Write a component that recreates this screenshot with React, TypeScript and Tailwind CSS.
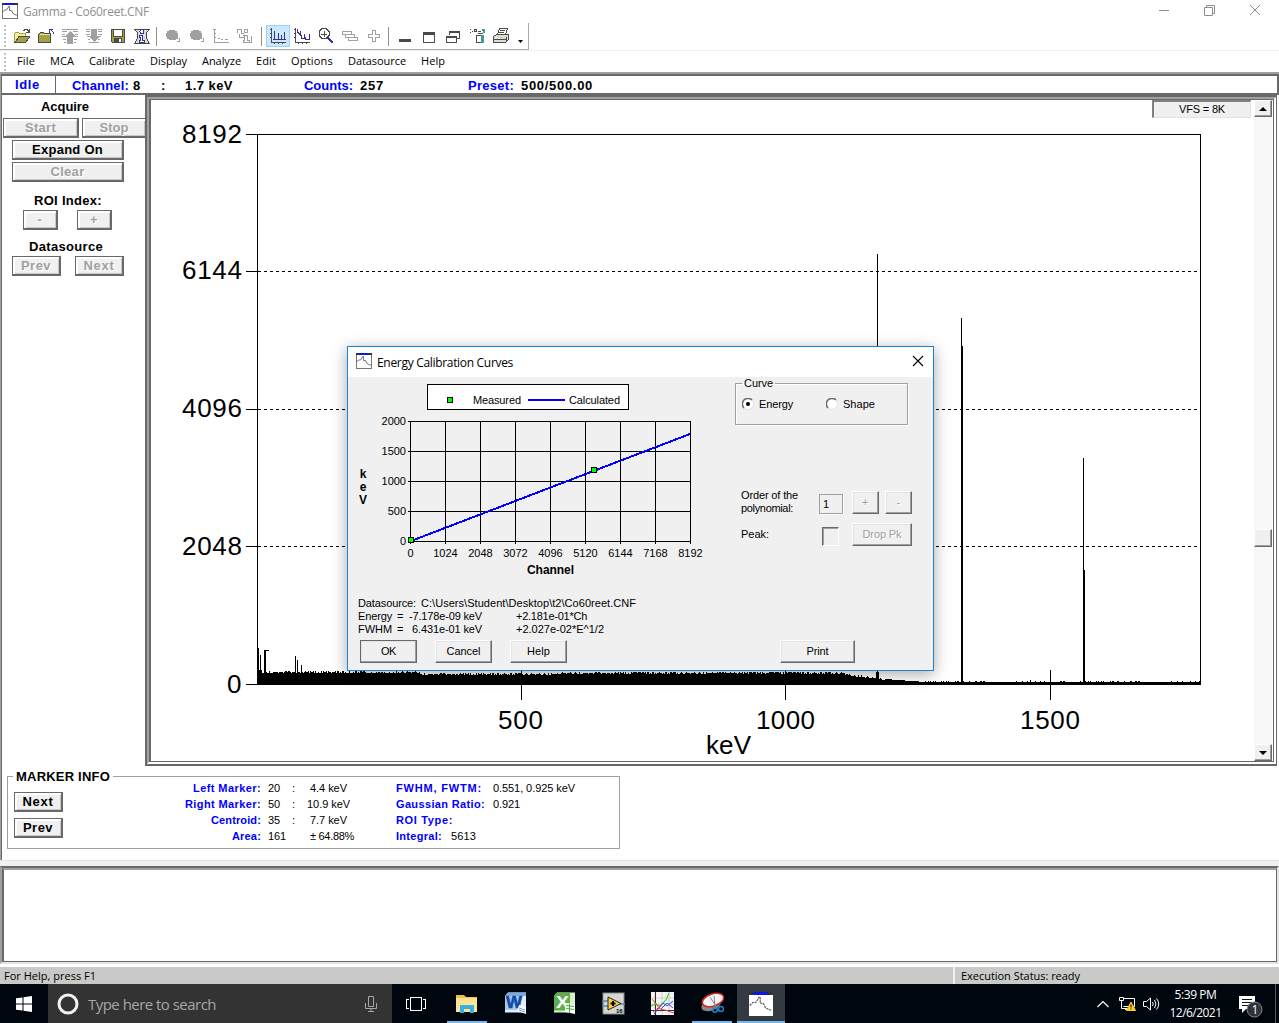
import { useLayoutEffect, useRef, type ReactNode } from "react";

type LabelProps = { w: number; children: string; className?: string };

/* One line of text, letter-spaced to fill exactly w pixels. */
function Label({ w, children, className = "" }: LabelProps) {
  const ref = useRef<HTMLSpanElement>(null);
  useLayoutEffect(() => {
    const el = ref.current;
    if (!el) return;
    el.style.letterSpacing = "0px";
    const natural = el.getBoundingClientRect().width;
    el.style.letterSpacing = `${(w - natural) / children.length}px`;
  }, [w, children]);
  return (
    <span className={`block shrink-0 whitespace-pre ${className}`} style={{ width: w }}>
      <span ref={ref} className="inline-block">{children}</span>
    </span>
  );
}

const UI = "font-['Open_Sans','Noto_Sans',sans-serif]";
const SANS = "font-['Liberation_Sans',Arial,sans-serif]";

function PanelButton({ children, tw, disabled, className }: { children: string; tw: number; disabled?: boolean; className: string }) {
  return (
    <button
      className={`flex shrink-0 items-center justify-center border border-r-2 border-b-2 border-[#696969] bg-[#f0f0f0] text-[13px] leading-none font-bold shadow-[inset_2px_2px_0_#fff,inset_-1px_-1px_0_#c8c8c8] ${disabled ? "text-[#a0a0a0] [text-shadow:1px_1px_0_#fff]" : "text-black"} ${className}`}
    >
      <Label w={tw}>{children}</Label>
    </button>
  );
}

function DialogButton({ children, tw, disabled, className = "" }: { children: string; tw: number; disabled?: boolean; className?: string }) {
  return (
    <button
      className={`flex shrink-0 items-center justify-center border border-t-white border-r-[#696969] border-b-[#696969] border-l-white bg-[#f0f0f0] text-[11px] leading-none shadow-[inset_-1px_-1px_0_#a0a0a0,inset_1px_1px_0_#e3e3e3] ${disabled ? "text-[#a0a0a0] [text-shadow:1px_1px_0_#fff]" : "text-black"} ${className}`}
    >
      <Label w={tw}>{children}</Label>
    </button>
  );
}

function AppIcon({ size = 16, gray = false }: { size?: number; gray?: boolean }) {
  return (
    <svg width={size} height={size} viewBox="0 0 16 16" className="shrink-0">
      <rect x=".5" y=".5" width="15" height="15" fill="#fff" stroke={gray ? "#777" : "#fff"} />
      <rect x="0" y="0" width="16" height="2" fill="#333" />
      <rect x="3" y="0" width="9.500" height="2" fill="#1414e6" />
      <path d="M.5 9l2-2h2l2-3v-.5h1v4l2 0 1.500 3 3 1.500h1" fill="none" stroke="#555" strokeWidth=".8" strokeDasharray={gray ? undefined : "1.500 .5"} />
    </svg>
  );
}

function Pix({ children, size = 16 }: { children: ReactNode; size?: number }) {
  return (
    <svg width={size} height={size} viewBox="0 0 16 16" shapeRendering="crispEdges" fill="none">
      {children}
    </svg>
  );
}

const G = "#a0a0a0";
const D = "#4a4a4a";

const icons: Record<string, ReactNode> = {
  open: (
    <>
      <path d="M.5 13.500V5.500l1-1h3l1 1h6v3" stroke="#a3a045" fill="#f0ee9a" />
      <path d="M1 14.500L5 8.500h11l-4.500 6z" fill="#a3a045" stroke={D} />
      <path d="M9 2.500h1V1.500h3v1h1v1" stroke={D} />
      <path d="M12 4.500h3.500V1" stroke={D} />
    </>
  ),
  close: (
    <>
      <path d="M0.500 14.500V6.500l2-2h3l1 1h6v9z" fill="#a3a045" stroke={D} />
      <path d="M2 6.500h10" stroke="#e8e68a" />
      <path d="M15.500 6V4.500l-3-3M11.500 5V1.500H15" stroke="#3a3aa0" />
    </>
  ),
  up: (
    <>
      <path d="M0 1.500h16M0 3.500h5M11 3.500h5M0 6.500h3M13 6.500h3M0 8.500h4M12 8.500h4M1 11.500h3M12 11.500h3M2 14.500h2M12 14.500h2" stroke={G} />
      <path d="M8 3l6 6h-3v7H5V9H2z" fill={G} />
    </>
  ),
  down: (
    <>
      <path d="M0 1.500h4M12 1.500h4M0 3.500h4M12 3.500h4M0 6.500h4M12 6.500h4M1 8.500h2M13 8.500h2M2 11.500h2M12 11.500h2M3 14.500h10" stroke={G} />
      <path d="M5 1h6v7h3l-6 6-6-6h3z" fill={G} />
    </>
  ),
  save: (
    <>
      <path d="M1.500 1.500h13v13h-12l-1-1z" fill="#a3a045" stroke={D} />
      <rect x="4" y="2" width="8" height="6" fill="#fff" />
      <path d="M3.500 1v7h9V1" stroke={D} />
      <rect x="4" y="10" width="8" height="5" fill={D} />
      <rect x="9" y="11" width="2" height="3" fill="#fff" />
    </>
  ),
  info: (
    <>
      <path d="M.5 1.500h15l-3 3v6l3 5H.500l3-5v-6z" fill="#dcdcdc" stroke={D} />
      <circle cx="8" cy="3.500" r="2" fill="#fff" stroke="#343496" />
      <path d="M5.500 7.500h3v5h2v2h-5v-2h1v-3h-1z" fill="#fff" stroke="#343496" />
    </>
  ),
  blob: (
    <>
      <path d="M4 2h6v1h2v2h1v6h-2v1H4v-1H2V9H1V5h1V3h2z" fill={G} />
      <path d="M12 13.500h2.500V10" stroke={G} />
    </>
  ),
  axes: <path d="M1.500 1v13.500H16M0 1.500h3M5 10.500h2M8 11.500h2M12 11.500h3M1 5.500h2M1 9.500h2" stroke={G} />,
  info2: (
    <>
      <path d="M.5 5V1.500h4v4h2M7.500 1.500h3v3h-3zM6 7.500h4.500v5h2v2h-6v-2h1v-5M14.500 8v6h-2M2.500 6v3.500h4" stroke={G} />
    </>
  ),
  spectrum: (
    <>
      <path d="M1.500 0v14.500H16M0 1.500h2M0 5.500h2M0 9.500h2M4.500 15v1M8.500 15v1M12.500 15v1" stroke={D} />
      <path d="M4.500 12V3M8.500 12V5M11.500 12V7M14.500 12V4M3 11.500h13" stroke="#343496" />
    </>
  ),
  spectrum2: (
    <>
      <path d="M1.500 0v14.500H16M0 1.500h2M0 5.500h2M0 9.500h2M4.500 15v1M8.500 15v1M12.500 15v1" stroke={D} />
      <path d="M3.500 1v3l3 3V3M7.500 7v3h3V6M11.500 9v2h4V6" stroke="#343496" />
    </>
  ),
  zoom: (
    <>
      <path d="M4 .5h4l3 3v4l-3 3H4l-3-3v-4z" fill="#fff" stroke={D} />
      <path d="M6 3v6M3 6h6" stroke={D} />
      <path d="M10 10l5 5" stroke="#343496" strokeWidth="2.500" />
    </>
  ),
  layers: <path d="M.5 3.500h9v3h-9zM3.500 7v2.500h9v-3H9M6.500 10v2.500h9v-3H12" stroke={G} />,
  plus: <path d="M6.500 2.500h3v4h4v3h-4v4h-3v-4h-4v-3h4z" stroke={G} strokeWidth="1.500" />,
  min: <rect x="2" y="11" width="12" height="3" fill={D} />,
  max: (
    <>
      <path d="M2.500 4.500h11v10h-11z" stroke={D} />
      <path d="M2 5.500h12" stroke={D} strokeWidth="3" />
    </>
  ),
  restore: (
    <>
      <path d="M4.500 7V3.500h10v7H12" stroke={D} />
      <path d="M4 4h11M1 9h11" stroke={D} strokeWidth="2" />
      <path d="M1.500 8.500h10v6h-10z" stroke={D} />
    </>
  ),
  spray: (
    <>
      <path d="M1 1h1M3 3h1M1 4h1M5 1.500h2v2H5zM9 3h3" stroke={D} />
      <path d="M7.500 7.500h7v7h-7z" fill="#fff" stroke={D} />
      <path d="M12 7h3v8h-3zM13 1h3v4h-2z" fill="#3f9a9a" />
      <path d="M9 5.500h5" stroke={D} />
    </>
  ),
  print: (
    <>
      <path d="M4.500 6.500l2-6h8l-2 6zM7 2.500h5M6 4.500h5" fill="#fff" stroke={D} />
      <path d="M.5 8.500l3-2h12v5l-3 3H.500z" fill="#ddd" stroke={D} />
      <path d="M1 11h12M13 9v5" stroke={D} />
      <rect x="7" y="9" width="3" height="1" fill="#e8d800" />
    </>
  ),
};

function ToolGroup({ names }: { names: string[] }) {
  return (
    <div className="flex">
      {names.map((n, i) => (
        <div
          key={i}
          className={`flex h-[22px] w-6 items-center justify-center ${n === "spectrum" ? "bg-[#cce8ff] outline outline-1 -outline-offset-1 outline-[#99d1ff]" : ""}`}
        >
          <Pix>{icons[n]}</Pix>
        </div>
      ))}
    </div>
  );
}

function Grip({ className }: { className: string }) {
  return <div className={`w-[2px] bg-[repeating-linear-gradient(to_bottom,#c4c4c4_0_2px,transparent_2px_4px)] ${className}`} />;
}

const menus: [string, number][] = [
  ["File", 18], ["MCA", 24], ["Calibrate", 46], ["Display", 37], ["Analyze", 39],
  ["Edit", 20], ["Options", 42], ["Datasource", 58], ["Help", 24],
];

/* Envelope of the counts histogram, with a deterministic ripple. */
function spectrumPath() {
  let d = "M257 685";
  for (let x = 257; x <= 1200; x++) {
    const n = (x * 7919 + ((x * x) % 31) * 17) % 5;
    let y: number;
    if (x < 262) y = x === 258 ? 648 : x === 260 ? 655 : 670;
    else if (x < 420) y = 671 + n * 0.5;
    else if (x < 700) y = 673.5 + n * 0.5 - ((x - 420) / 280) * 2;
    else if (x < 845) y = 671.5 + n * 0.5;
    else if (x < 885) y = 673 + ((x - 845) / 40) * 6 + n * 0.5;
    else if (x < 925) y = 679 + ((x - 885) / 40) * 3;
    else y = n === 0 ? 681 : 682;
    d += `V${y}H${x + 1}`;
  }
  return d + "V685Z";
}

function SpectrumChart() {
  return (
    <svg width="1103" height="661" viewBox="151 100 1103 661" className="block shrink-0" shapeRendering="crispEdges">
      <path d="M246 134.500H1200.500V684.500H246M257.500 134V684M246 271.500H257M246 409.500H257M246 546.500H257" fill="none" stroke="#000" />
      <path d="M258 271.500H1200M258 409.500H1200M258 546.500H1200" stroke="#000" strokeDasharray="3 3" />
      <path d="M521.500 670V700M785.500 670V700M1050.500 670V700" stroke="#000" />
      <path d={spectrumPath()} fill="#000" />
      <path d="M264.500 684V650.500H269M295.500 684V656M297.500 684V660M301.500 684V665M877.500 684V254M1030.500 684V680" fill="none" stroke="#000" />
      <path d="M265 684V650M961.500 684V318M1083.500 684V458" fill="none" stroke="#000" />
      <path d="M876 672h3v12h-3zM961 346h2v338h-2zM1083 570h2v114h-2z" fill="#000" />
      <g fontFamily="Liberation Sans, Arial, sans-serif" fontSize="26" shapeRendering="auto">
        <text x="182" y="143" textLength="60">8192</text>
        <text x="182" y="279" textLength="60">6144</text>
        <text x="182" y="417" textLength="60">4096</text>
        <text x="182" y="555" textLength="60">2048</text>
        <text x="227" y="693">0</text>
        <text x="498" y="729" textLength="45">500</text>
        <text x="756" y="729" textLength="59">1000</text>
        <text x="1020" y="729" textLength="60">1500</text>
        <text x="706" y="754" textLength="45">keV</text>
      </g>
    </svg>
  );
}

function CalibrationChart() {
  const cols = [0, 1024, 2048, 3072, 4096, 5120, 6144, 7168, 8192];
  const rows = [2000, 1500, 1000, 500, 0];
  return (
    <svg width="372" height="205" viewBox="348 377 372 205" className="block shrink-0" shapeRendering="crispEdges">
      <rect x="427.500" y="384.500" width="201" height="25" fill="#fff" stroke="#000" />
      <rect x="447.500" y="397.500" width="5" height="5" fill="#0f0" stroke="#000" />
      <path d="M528 400H565" stroke="#00f" strokeWidth="2" />
      {cols.map((_, i) => (
        <path key={i} d={`M${410.5 + 35 * i} 421V544`} stroke="#000" />
      ))}
      {rows.map((_, i) => (
        <path key={i} d={`M408 ${421.5 + 30 * i}H690`} stroke="#000" />
      ))}
      <path d="M411 541L690 434" stroke="#00f" strokeWidth="2" />
      <rect x="408.500" y="537.500" width="5" height="5" fill="#0f0" stroke="#000" />
      <rect x="591.500" y="467.500" width="5" height="5" fill="#0f0" stroke="#000" />
      <g fontFamily="Liberation Sans, Arial, sans-serif" fontSize="11">
        <text x="473" y="404" textLength="48">Measured</text>
        <text x="569" y="404" textLength="51">Calculated</text>
        {rows.map((r, i) => (
          <text key={r} x="406" y={425 + 30 * i} textAnchor="end">{r}</text>
        ))}
        {cols.map((c, i) => (
          <text key={c} x={410.500 + 35 * i} y="557" textAnchor="middle">{c}</text>
        ))}
        <g fontWeight="bold" fontSize="12">
          <text x="527" y="574" textLength="47">Channel</text>
          <text x="363" y="478" textAnchor="middle">k</text>
          <text x="363" y="491" textAnchor="middle">e</text>
          <text x="363" y="504" textAnchor="middle">V</text>
        </g>
      </g>
    </svg>
  );
}

function Radio({ on }: { on?: boolean }) {
  return (
    <svg width="12" height="12" viewBox="0 0 12 12" className="shrink-0">
      <circle cx="6" cy="6" r="5" fill="#fff" />
      <path d="M2 10A5.500 5.500 0 0 1 10 2" fill="none" stroke="#707070" strokeWidth="1.600" />
      <path d="M10 2A5.500 5.500 0 0 1 2 10" fill="none" stroke="#e3e3e3" />
      {on && <circle cx="6" cy="6" r="2" />}
    </svg>
  );
}

function CalibrationDialog() {
  return (
    <section className={`absolute top-[346px] left-[347px] flex h-[325px] w-[587px] flex-col border border-[#1883d7] bg-[#f0f0f0] text-[11px] leading-[13px] shadow-[0_3px_14px_rgba(0,0,0,0.35)] ${SANS}`}>
      <header className={`flex h-[30px] shrink-0 items-center bg-white pl-2 text-[12px] ${UI}`}>
        <span className="-mt-[2px]"><AppIcon gray /></span>
        <Label w={136} className="ml-[5px]">Energy Calibration Curves</Label>
        <svg width="12" height="12" viewBox="0 0 12 12" className="mr-[9px] mb-[2px] ml-auto">
          <path d="M1 1l10 10M11 1L1 11" stroke="#000" strokeWidth="1.100" />
        </svg>
      </header>
      <div className="flex h-[205px]">
        <CalibrationChart />
        <div className="flex flex-col">
          <fieldset className="ml-[15px] h-[48px] w-[173px] border border-[#a0a0a0] pl-[6px] shadow-[1px_1px_0_#fff,inset_1px_1px_0_#fff]">
            <legend className="px-[2px]"><Label w={29}>Curve</Label></legend>
            <div className="mt-[8px] flex items-center">
              <span className="-mt-[2px]"><Radio on /></span>
              <Label w={34} className="ml-[5px]">Energy</Label>
              <span className="-mt-[2px] ml-[33px]"><Radio /></span>
              <Label w={32} className="ml-[5px]">Shape</Label>
            </div>
          </fieldset>
          <div className="mt-[64px] ml-[21px] flex items-start">
            <div className="w-[78px]">
              <Label w={57}>Order of the</Label>
              <Label w={52}>polynomial:</Label>
            </div>
            <div className="mt-[5px] h-[20px] w-[24px] border border-[#a0a0a0] pt-[3px] pl-[3px] shadow-[1px_1px_0_#fff]">1</div>
            <DialogButton tw={7} disabled className="mt-[2px] ml-[9px] h-[23px] w-[27px]">+</DialogButton>
            <DialogButton tw={4} disabled className="mt-[2px] ml-[6px] h-[23px] w-[27px]">-</DialogButton>
          </div>
          <div className="mt-[8px] ml-[21px] flex items-start">
            <Label w={28} className="mt-[5px]">Peak:</Label>
            <div className="mt-[4px] ml-[53px] h-[19px] w-[17px] border border-t-[#696969] border-r-white border-b-white border-l-[#696969] shadow-[inset_1px_1px_0_#a0a0a0]" />
            <DialogButton tw={39} disabled className="ml-[13px] h-[23px] w-[60px]">Drop Pk</DialogButton>
          </div>
        </div>
      </div>
      <div className="mt-[15px] ml-[10px]">
        <div className="flex"><Label w={58}>Datasource:</Label><Label w={215} className="ml-[5px]">C:\Users\Student\Desktop\t2\Co60reet.CNF</Label></div>
        <div className="flex"><Label w={34}>Energy</Label><Label w={7} className="ml-[5px]">=</Label><Label w={73} className="ml-[5px]">-7.178e-09 keV</Label><Label w={71} className="ml-[34px]">+2.181e-01*Ch</Label></div>
        <div className="flex"><Label w={34}>FWHM</Label><Label w={7} className="ml-[5px]">=</Label><Label w={70} className="ml-[8px]">6.431e-01 keV</Label><Label w={88} className="ml-[34px]">+2.027e-02*E^1/2</Label></div>
      </div>
      <div className="mt-[4px] ml-[12px] flex">
        <DialogButton tw={15} className="h-[23px] w-[57px] outline outline-1 -outline-offset-1 outline-[#696969]">OK</DialogButton>
        <DialogButton tw={34} className="ml-[18px] h-[23px] w-[57px]">Cancel</DialogButton>
        <DialogButton tw={23} className="ml-[18px] h-[23px] w-[57px]">Help</DialogButton>
        <DialogButton tw={22} className="ml-[213px] h-[23px] w-[75px]">Print</DialogButton>
      </div>
    </section>
  );
}

function Arrow({ up, className = "" }: { up?: boolean; className?: string }) {
  return (
    <div className={`flex h-[17px] w-[18px] items-center justify-center border border-t-white border-r-[#696969] border-b-[#696969] border-l-white bg-[#f0f0f0] shadow-[inset_-1px_-1px_0_#a0a0a0] ${className}`}>
      <svg width="8" height="4" viewBox="0 0 8 4"><path d={up ? "M0 4h8L4 0z" : "M0 0h8L4 4z"} /></svg>
    </div>
  );
}

const leftInfo: [string, number, string, number, string, string, number, string][] = [
  ["Left Marker:", 68, "20", 12, ":", "4.4 keV", 37, "ml-[14px]"],
  ["Right Marker:", 76, "50", 12, ":", "10.9 keV", 43, "ml-[11px]"],
  ["Centroid:", 50, "35", 12, ":", "7.7 keV", 37, "ml-[14px]"],
  ["Area:", 29, "161", 18, " ", "± 64.88%", 44, "ml-[8px]"],
];
const rightInfo: [string, number, string, number, string][] = [
  ["FWHM, FWTM:", 86, "0.551, 0.925 keV", 82, "ml-[11px]"],
  ["Gaussian Ratio:", 89, "0.921", 27, "ml-[8px]"],
  ["ROI Type:", 57, "", 0, ""],
  ["Integral:", 46, "5613", 25, "ml-[9px]"],
];

function MarkerInfo() {
  return (
    <fieldset className="mt-[3px] ml-[5px] flex h-[80px] w-[613px] border border-[#a0a0a0] text-[11px] leading-4">
      <legend className="ml-[5px] px-[3px] pt-px text-[13px] leading-[14px] font-semibold"><Label w={94}>MARKER INFO</Label></legend>
      <div className="flex h-full">
        <div className="ml-[6px] flex flex-col gap-[6px] pt-[8px]">
          <PanelButton tw={31} className="h-5 w-[49px]">Next</PanelButton>
          <PanelButton tw={30} className="h-5 w-[49px]">Prev</PanelButton>
        </div>
        <div className="-mt-[4px] ml-[113px]">
          {leftInfo.map(([l, lw, a, aw, c, v, vw, m]) => (
            <div key={l} className="flex h-4">
              <div className="flex w-[85px] justify-end font-bold text-[#0000ff]"><Label w={lw}>{l}</Label></div>
              <div className="ml-[7px] w-[24px]"><Label w={aw}>{a}</Label></div>
              <Label w={4}>{c}</Label>
              <Label w={vw} className={l === "Area:" ? "ml-[14px]" : m}>{v}</Label>
            </div>
          ))}
        </div>
        <div className="-mt-[4px] ml-[42px]">
          {rightInfo.map(([l, lw, v, vw, m]) => (
            <div key={l} className="flex h-4">
              <Label w={lw} className="font-bold text-[#0000ff]">{l}</Label>
              {v && <Label w={vw} className={m}>{v}</Label>}
            </div>
          ))}
        </div>
      </div>
    </fieldset>
  );
}

const taskApps: { id: string; line?: boolean; art: ReactNode }[] = [
  {
    id: "explorer", line: true, art: (
      <>
        <path d="M1 3h8l2 2h11v15H1z" fill="#f0bd4d" />
        <path d="M1 6h21v14H1z" fill="#ffe394" />
        <path d="M5 21v-8h14v8h-4v-4H9v4z" fill="#36b1e6" />
      </>
    ),
  },
  {
    id: "word", art: (
      <>
        <path d="M4 .5h18v20H1V4z" fill="#e4eefb" />
        <path d="M4 .5h18V4H1z" fill="#7fa9de" />
        <path d="M1 4h16v14H1z" fill="#a9c8ee" />
        <text x="2" y="16" textLength="16" lengthAdjust="spacingAndGlyphs" fontSize="16" fontWeight="bold" fill="#0d4aa8" stroke="#0d4aa8" strokeWidth=".6" fontFamily="Liberation Sans, sans-serif">W</text>
        <path d="M15 13l7 2v7l-9-3z" fill="#fff" />
        <path d="M15 16l6 2M15 18l6 2" stroke="#6f9bd8" />
      </>
    ),
  },
  {
    id: "excel", art: (
      <>
        <path d="M4 .5h18v20H1V4z" fill="#d8efcd" />
        <path d="M4 .5h13v18H1V4z" fill="#5eae4a" />
        <text x="3" y="16" textLength="13" lengthAdjust="spacingAndGlyphs" fontSize="17" fontWeight="bold" fill="#fff" fontFamily="Liberation Sans, sans-serif">X</text>
        <path d="M12 11l10 1v10l-10-2z" fill="#f4fff0" />
        <path d="M13 13.500l8 1M13 16.500l8 1M16.500 12v9" stroke="#4fa73c" />
      </>
    ),
  },
  {
    id: "labview", art: (
      <>
        <rect x="1" y="1" width="21" height="21" fill="#d5d5d2" stroke="#888" />
        <path d="M0 9h7M0 14h7M17 12h6" stroke="#3e8ed0" strokeWidth="1.500" />
        <path d="M6 5l13 6.500-13 6.500z" fill="#f8d040" stroke="#222" />
        <path d="M8.500 11.500h5M11 9v5" stroke="#000" strokeWidth="2" />
        <text x="14" y="21" fontSize="6" fontWeight="bold" fontFamily="Liberation Sans, sans-serif">16</text>
      </>
    ),
  },
  {
    id: "plot", art: (
      <>
        <rect width="23" height="23" fill="#f4f4f4" />
        <path d="M4 0v23M11 0v23M18 0v23M0 6h23M0 12h23" stroke="#bbb" strokeWidth=".6" />
        <path d="M4.500 0v23M0 18.500h23" stroke="#000" strokeWidth=".8" />
        <path d="M0 14l5-2 4 2 6-6 3-7" fill="none" stroke="#2fe02f" strokeWidth="1.200" />
        <path d="M3 22l9-11 4 3 6-5M10 17l6-6 6 5" fill="none" stroke="#4545e8" />
        <path d="M1 7l8 10 5 1 9 3M2 20l9-7" fill="none" stroke="#e84545" />
      </>
    ),
  },
  {
    id: "snip", line: true, art: (
      <>
        <ellipse cx="10" cy="13" rx="10" ry="5.500" fill="#888" transform="rotate(-20 10 13)" />
        <ellipse cx="12" cy="8" rx="11" ry="6" fill="#f4f4f4" stroke="#d42a2a" strokeWidth="1.500" transform="rotate(-18 12 8)" />
        <path d="M9 5l7 11M13 4l1 11" stroke="#888" />
        <circle cx="14" cy="18" r="2.300" fill="none" stroke="#2185d0" strokeWidth="1.500" />
        <circle cx="20" cy="17" r="2.500" fill="none" stroke="#2185d0" strokeWidth="1.500" />
      </>
    ),
  },
];

function Taskbar() {
  return (
    <footer className={`flex h-[39px] shrink-0 bg-[#00060e] text-white ${UI}`}>
      <div className="flex w-12 items-center justify-center">
        <svg width="16" height="16" viewBox="0 0 16 16" fill="#fff"><path d="M0 2.300L6.500 1.400V7.500H0zM7.500 1.200L16 0V7.500H7.500zM0 8.500h6.500v6.100L0 13.700zM7.500 8.500H16V16l-8.500-1.200z" /></svg>
      </div>
      <div className="flex w-[344px] items-center bg-[#333] pl-[9px] text-[15px] text-[#a6a6a6]">
        <svg width="22" height="22" viewBox="0 0 22 22"><circle cx="11" cy="11" r="9" fill="none" stroke="#f2f2f2" strokeWidth="3" /></svg>
        <Label w={128} className="mt-[2px] ml-[9px]">Type here to search</Label>
        <svg width="12" height="18" viewBox="0 0 12 18" fill="none" stroke="#a6a6a6" className="mr-[15px] ml-auto"><path d="M3.500 1.500h5v10h-5zM.5 8v5.500h11V8M6 14v3M3 16.500h6" /></svg>
      </div>
      <div className="flex w-12 items-center justify-center">
        <svg width="20" height="16" viewBox="0 0 20 16" fill="none" stroke="#fff" shapeRendering="crispEdges"><path d="M4.500 1.500h11v13h-11zM3 3.500H.500v9H3M17 3.500h2.500v9H17" /></svg>
      </div>
      <div className="ml-[2px] flex">
        {taskApps.map((a) => (
          <div key={a.id} className={`flex flex-col items-center ${a.id === "snip" ? "w-[50px]" : "w-[49px]"}`}>
            <svg width="23" height="23" viewBox="0 0 23 23" className="mt-[8px]">{a.art}</svg>
            {a.line && <div className="mt-auto h-[2px] w-10 bg-[#76b9ed]" />}
          </div>
        ))}
        <div className="flex w-12 flex-col items-center bg-[#333a42]">
          <span className="mt-[8px]"><AppIcon size={24} /></span>
          <div className="mt-auto h-[2px] w-full bg-[#76b9ed]" />
        </div>
      </div>
      <div className="ml-auto flex items-center">
        <svg width="14" height="8" viewBox="0 0 14 8" fill="none" stroke="#fff" strokeWidth="1.200"><path d="M1.500 7L7 1.500 12.500 7" /></svg>
        <svg width="18" height="16" viewBox="0 0 18 16" className="ml-[9px]" fill="none" stroke="#fff">
          <path d="M4.500 2.500h11v8h-11M.500 1.500h4v3h-4zM2.500 5v7.500H9M6 13.500h4" />
          <path d="M12 6l4.500 8.500h-9z" fill="#fc2" stroke="#fc2" />
          <path d="M12 8.500v3M12 12.500v1" stroke="#000" />
        </svg>
        <svg width="18" height="16" viewBox="0 0 18 16" className="ml-[6px]" fill="none" stroke="#fff">
          <path d="M.500 5.500h3l4-3.500v12l-4-3.500h-3zM9.500 6q1.500 2 0 4M11.500 4q3 4 0 8M13.500 2.500q4.500 5.500 0 11" />
        </svg>
        <div className="ml-[8px] flex w-[53px] flex-col items-center text-[12px] leading-[18px]">
          <Label w={42}>5:39 PM</Label>
          <Label w={52}>12/6/2021</Label>
        </div>
        <svg width="26" height="24" viewBox="0 0 26 24" className="mt-[5px] ml-[16px]">
          <path d="M1 2h16v13H8l-4 4v-4H1z" fill="#fff" />
          <path d="M4 5.500h10M4 8.500h10M4 11.500h7" stroke="#111" />
          <circle cx="16.500" cy="15.500" r="7.500" fill="#30343a" stroke="#888" />
          <text x="13.500" y="20" fontSize="12" fill="#fff" fontFamily="Open Sans, sans-serif">1</text>
        </svg>
        <div className="ml-[11px] h-full w-px bg-[#555]" />
        <div className="w-[3px]" />
      </div>
    </footer>
  );
}

export default function App() {
  return (
    <div className={`relative flex h-[1023px] w-[1279px] flex-col overflow-hidden bg-white text-black ${SANS}`}>
      <header className={`flex h-[23px] shrink-0 items-center pl-[2px] text-[12px] text-[#8f8f8f] ${UI}`}>
        <span className="-mt-px"><AppIcon gray /></span>
        <Label w={126} className="ml-[5px]">Gamma - Co60reet.CNF</Label>
        <svg width="100" height="12" viewBox="0 0 100 12" className="mr-[20px] mb-[3px] ml-auto overflow-visible" fill="none" stroke="#8f8f8f">
          <path d="M0 6.500H10M45.500 3.500h8v8h-8zM47.500 3V1.500h8v8H54" />
          <path d="M91 1l10 10M101 1l-10 10" />
        </svg>
      </header>

      <div className="flex h-[27px] w-[529px] shrink-0 items-center border-r border-b border-[#a8a8a8]">
        <Grip className="ml-1 h-[22px]" />
        <div className="ml-1 flex items-center">
          <ToolGroup names={["open", "close", "up", "down", "save", "info"]} />
          <div className="mr-[4px] ml-[2px] h-[19px] w-px bg-[#8f8f8f]" />
          <ToolGroup names={["blob", "blob", "axes", "info2"]} />
          <div className="mr-[4px] ml-[4px] h-[19px] w-px bg-[#8f8f8f]" />
          <ToolGroup names={["spectrum", "spectrum2", "zoom", "layers", "plus"]} />
          <div className="mr-[4px] ml-[2px] h-[19px] w-px bg-[#8f8f8f]" />
          <ToolGroup names={["min", "max", "restore", "spray", "print"]} />
          <svg width="5" height="3" viewBox="0 0 5 3" className="mt-[10px] ml-[5px]"><path d="M0 0h5L2.500 3z" /></svg>
        </div>
      </div>

      <nav className={`flex h-[22px] shrink-0 items-center border-t border-[#f0f0f6] text-[11px] ${UI}`}>
        <Grip className="ml-1 h-[18px]" />
        <div className="ml-[11px] flex gap-[15px]">
          {menus.map(([m, w]) => <Label key={m} w={w}>{m}</Label>)}
        </div>
      </nav>

      <div className="flex h-[788px] shrink-0 flex-col border-t-2 border-l border-[#a0a0a0]">
        <div className="flex h-full flex-col border-t-2 border-l border-[#696969]">
          <div className="flex h-[19px] shrink-0 items-center border-r-2 border-b-2 border-[#696969] text-[13px] leading-none font-bold">
            <div className="flex h-full w-[54px] items-center border-r border-[#696969] pl-[13px] text-[#0000ff]"><Label w={25}>Idle</Label></div>
            <Label w={57} className="mt-px ml-[16px] text-[#0000ff]">Channel:</Label>
            <Label w={8} className="mt-px ml-[4px]">8</Label>
            <Label w={4} className="mt-px ml-[20px]">:</Label>
            <Label w={48} className="mt-px ml-[20px]">1.7 keV</Label>
            <Label w={49} className="mt-px ml-[71px] text-[#0000ff]">Counts:</Label>
            <Label w={24} className="mt-px ml-[7px]">257</Label>
            <Label w={46} className="mt-px ml-[84px] text-[#0000ff]">Preset:</Label>
            <Label w={72} className="mt-px ml-[7px]">500/500.00</Label>
          </div>
          <div className="flex h-[671px] shrink-0">
            <aside className="flex w-[143px] shrink-0 flex-col overflow-hidden text-[13px] leading-[14px] font-bold">
              <Label w={48} className="mt-[5px] ml-[39px]">Acquire</Label>
              <div className="mt-[4px] ml-px flex gap-[3px]">
                <PanelButton disabled tw={31} className="h-5 w-[76px]">Start</PanelButton>
                <PanelButton disabled tw={29} className="h-5 w-[65px]">Stop</PanelButton>
              </div>
              <PanelButton tw={71} className="mt-[2px] ml-[10px] h-5 w-[112px]">Expand On</PanelButton>
              <PanelButton disabled tw={34} className="mt-[2px] ml-[10px] h-5 w-[112px]">Clear</PanelButton>
              <Label w={68} className="mt-[12px] ml-[32px]">ROI Index:</Label>
              <div className="mt-[2px] ml-[21px] flex gap-[19px]">
                <PanelButton disabled tw={5} className="h-5 w-[35px]">-</PanelButton>
                <PanelButton disabled tw={8} className="h-5 w-[35px]">+</PanelButton>
              </div>
              <Label w={74} className="mt-[10px] ml-[27px]">Datasource</Label>
              <div className="mt-[2px] ml-[10px] flex gap-[14px]">
                <PanelButton disabled tw={30} className="h-5 w-[49px]">Prev</PanelButton>
                <PanelButton disabled tw={31} className="h-5 w-[49px]">Next</PanelButton>
              </div>
            </aside>
            <main className="w-[1132px] border-2 border-r-[1px] border-[#696969]">
              <div className="h-full border-2 border-t-[#a0a0a0] border-r-white border-b-white border-l-[#a0a0a0]">
                <div className="flex h-full border border-l-2 border-[#696969]">
                  <div className="relative">
                    <SpectrumChart />
                    <div className="absolute top-0 right-[3px] flex h-[18px] w-[99px] items-center justify-center border-t-2 border-r border-b border-l-2 border-t-[#808080] border-r-[#e3e3e3] border-b-[#e3e3e3] border-l-[#808080] bg-[#f0f0f0] text-[11px] leading-none">
                      <Label w={46}>VFS = 8K</Label>
                    </div>
                  </div>
                  <div className="flex w-[18px] flex-col bg-[#f8f8f8]">
                    <Arrow up />
                    <div className="mt-[412px] h-[18px] border border-t-white border-r-[#696969] border-b-[#696969] border-l-white bg-[#f0f0f0] shadow-[inset_-1px_-1px_0_#a0a0a0]" />
                    <Arrow className="mt-auto" />
                  </div>
                </div>
              </div>
            </main>
          </div>
          <MarkerInfo />
        </div>
      </div>

      <div className="h-[6px] shrink-0 border-t border-[#e3e3e3] bg-[#f0f0f0]" />
      <div className="h-[98px] shrink-0 border-2 border-t-[#696969] border-r-[#e3e3e3] border-b-[#e3e3e3] border-l-[#a0a0a0]">
        <div className="h-full border border-t-2 border-l-2 border-[#696969] border-t-[#a0a0a0]" />
      </div>
      <div className={`mt-[3px] flex h-[17px] shrink-0 items-center bg-[#c9c9c7] pl-1 text-[11px] ${UI}`}>
        <Label w={92} className="mt-px">For Help, press F1</Label>
        <div className="ml-[857px] h-full w-[2px] bg-[#f0f0f0]" />
        <Label w={119} className="mt-px ml-[6px]">Execution Status: ready</Label>
      </div>
      <Taskbar />
      <CalibrationDialog />
    </div>
  );
}
